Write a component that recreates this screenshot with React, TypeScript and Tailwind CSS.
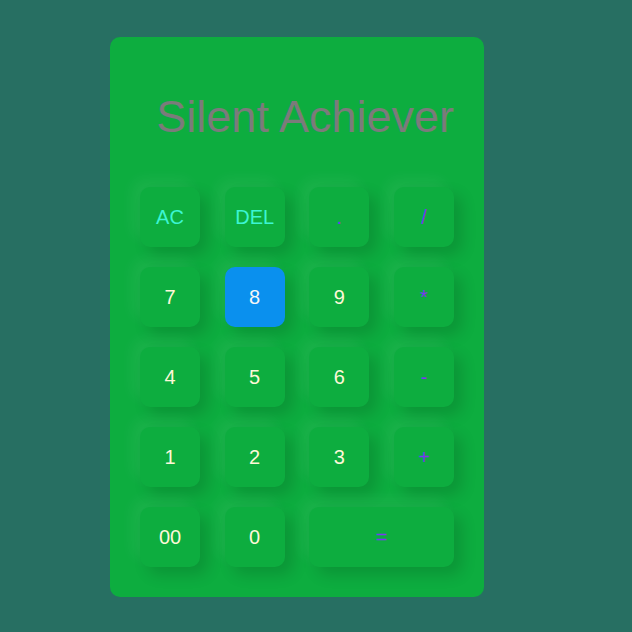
import React from "react";

type Key = { label: string; kind: "fn" | "num" | "op" | "active"; wide?: boolean };

const keys: Key[] = [
  { label: "AC", kind: "fn" },
  { label: "DEL", kind: "fn" },
  { label: ".", kind: "op" },
  { label: "/", kind: "op" },
  { label: "7", kind: "num" },
  { label: "8", kind: "active" },
  { label: "9", kind: "num" },
  { label: "*", kind: "op" },
  { label: "4", kind: "num" },
  { label: "5", kind: "num" },
  { label: "6", kind: "num" },
  { label: "-", kind: "op" },
  { label: "1", kind: "num" },
  { label: "2", kind: "num" },
  { label: "3", kind: "num" },
  { label: "+", kind: "op" },
  { label: "00", kind: "num" },
  { label: "0", kind: "num" },
  { label: "=", kind: "op", wide: true },
];

function KeyButton({ k }: { k: Key }) {
  const base =
    "h-[60px] rounded-[10px] flex items-center justify-center text-[20px] shadow-[8px_8px_15px_rgba(0,0,0,0.14),-8px_-8px_15px_rgba(255,255,255,0.06)]";
  const color =
    k.kind === "fn"
      ? "bg-[#0dad3f] text-[#3cf5d2]"
      : k.kind === "num"
      ? "bg-[#0dad3f] text-[#fdf8d8]"
      : k.kind === "op"
      ? "bg-[#0dad3f] text-[#7b36f2]"
      : "bg-[#0a90ee] text-[#f6f6f6]";
  return (
    <div className={`${base} ${color} ${k.wide ? "col-span-2" : ""}`}>{k.label}</div>
  );
}

export default function App() {
  return (
    <div
      className="min-h-[632px] w-full bg-[#276f62] pl-[110px] pt-[37px]"
      style={{ fontFamily: '"Liberation Sans", Arial, sans-serif' }}
    >
      <div className="w-[374px] h-[560px] rounded-[10px] bg-[#0dad3f] px-[30px] pt-[55px]">
        <div className="h-[50px] leading-[50px] text-right text-[45px] text-[#7b7b7b] whitespace-nowrap">
          Silent Achiever
        </div>
        <div className="mt-[45px] grid grid-cols-[60px_60px_60px_60px] justify-between gap-y-[20px]">
          {keys.map((k) => (
            <KeyButton key={k.label} k={k} />
          ))}
        </div>
      </div>
    </div>
  );
}
